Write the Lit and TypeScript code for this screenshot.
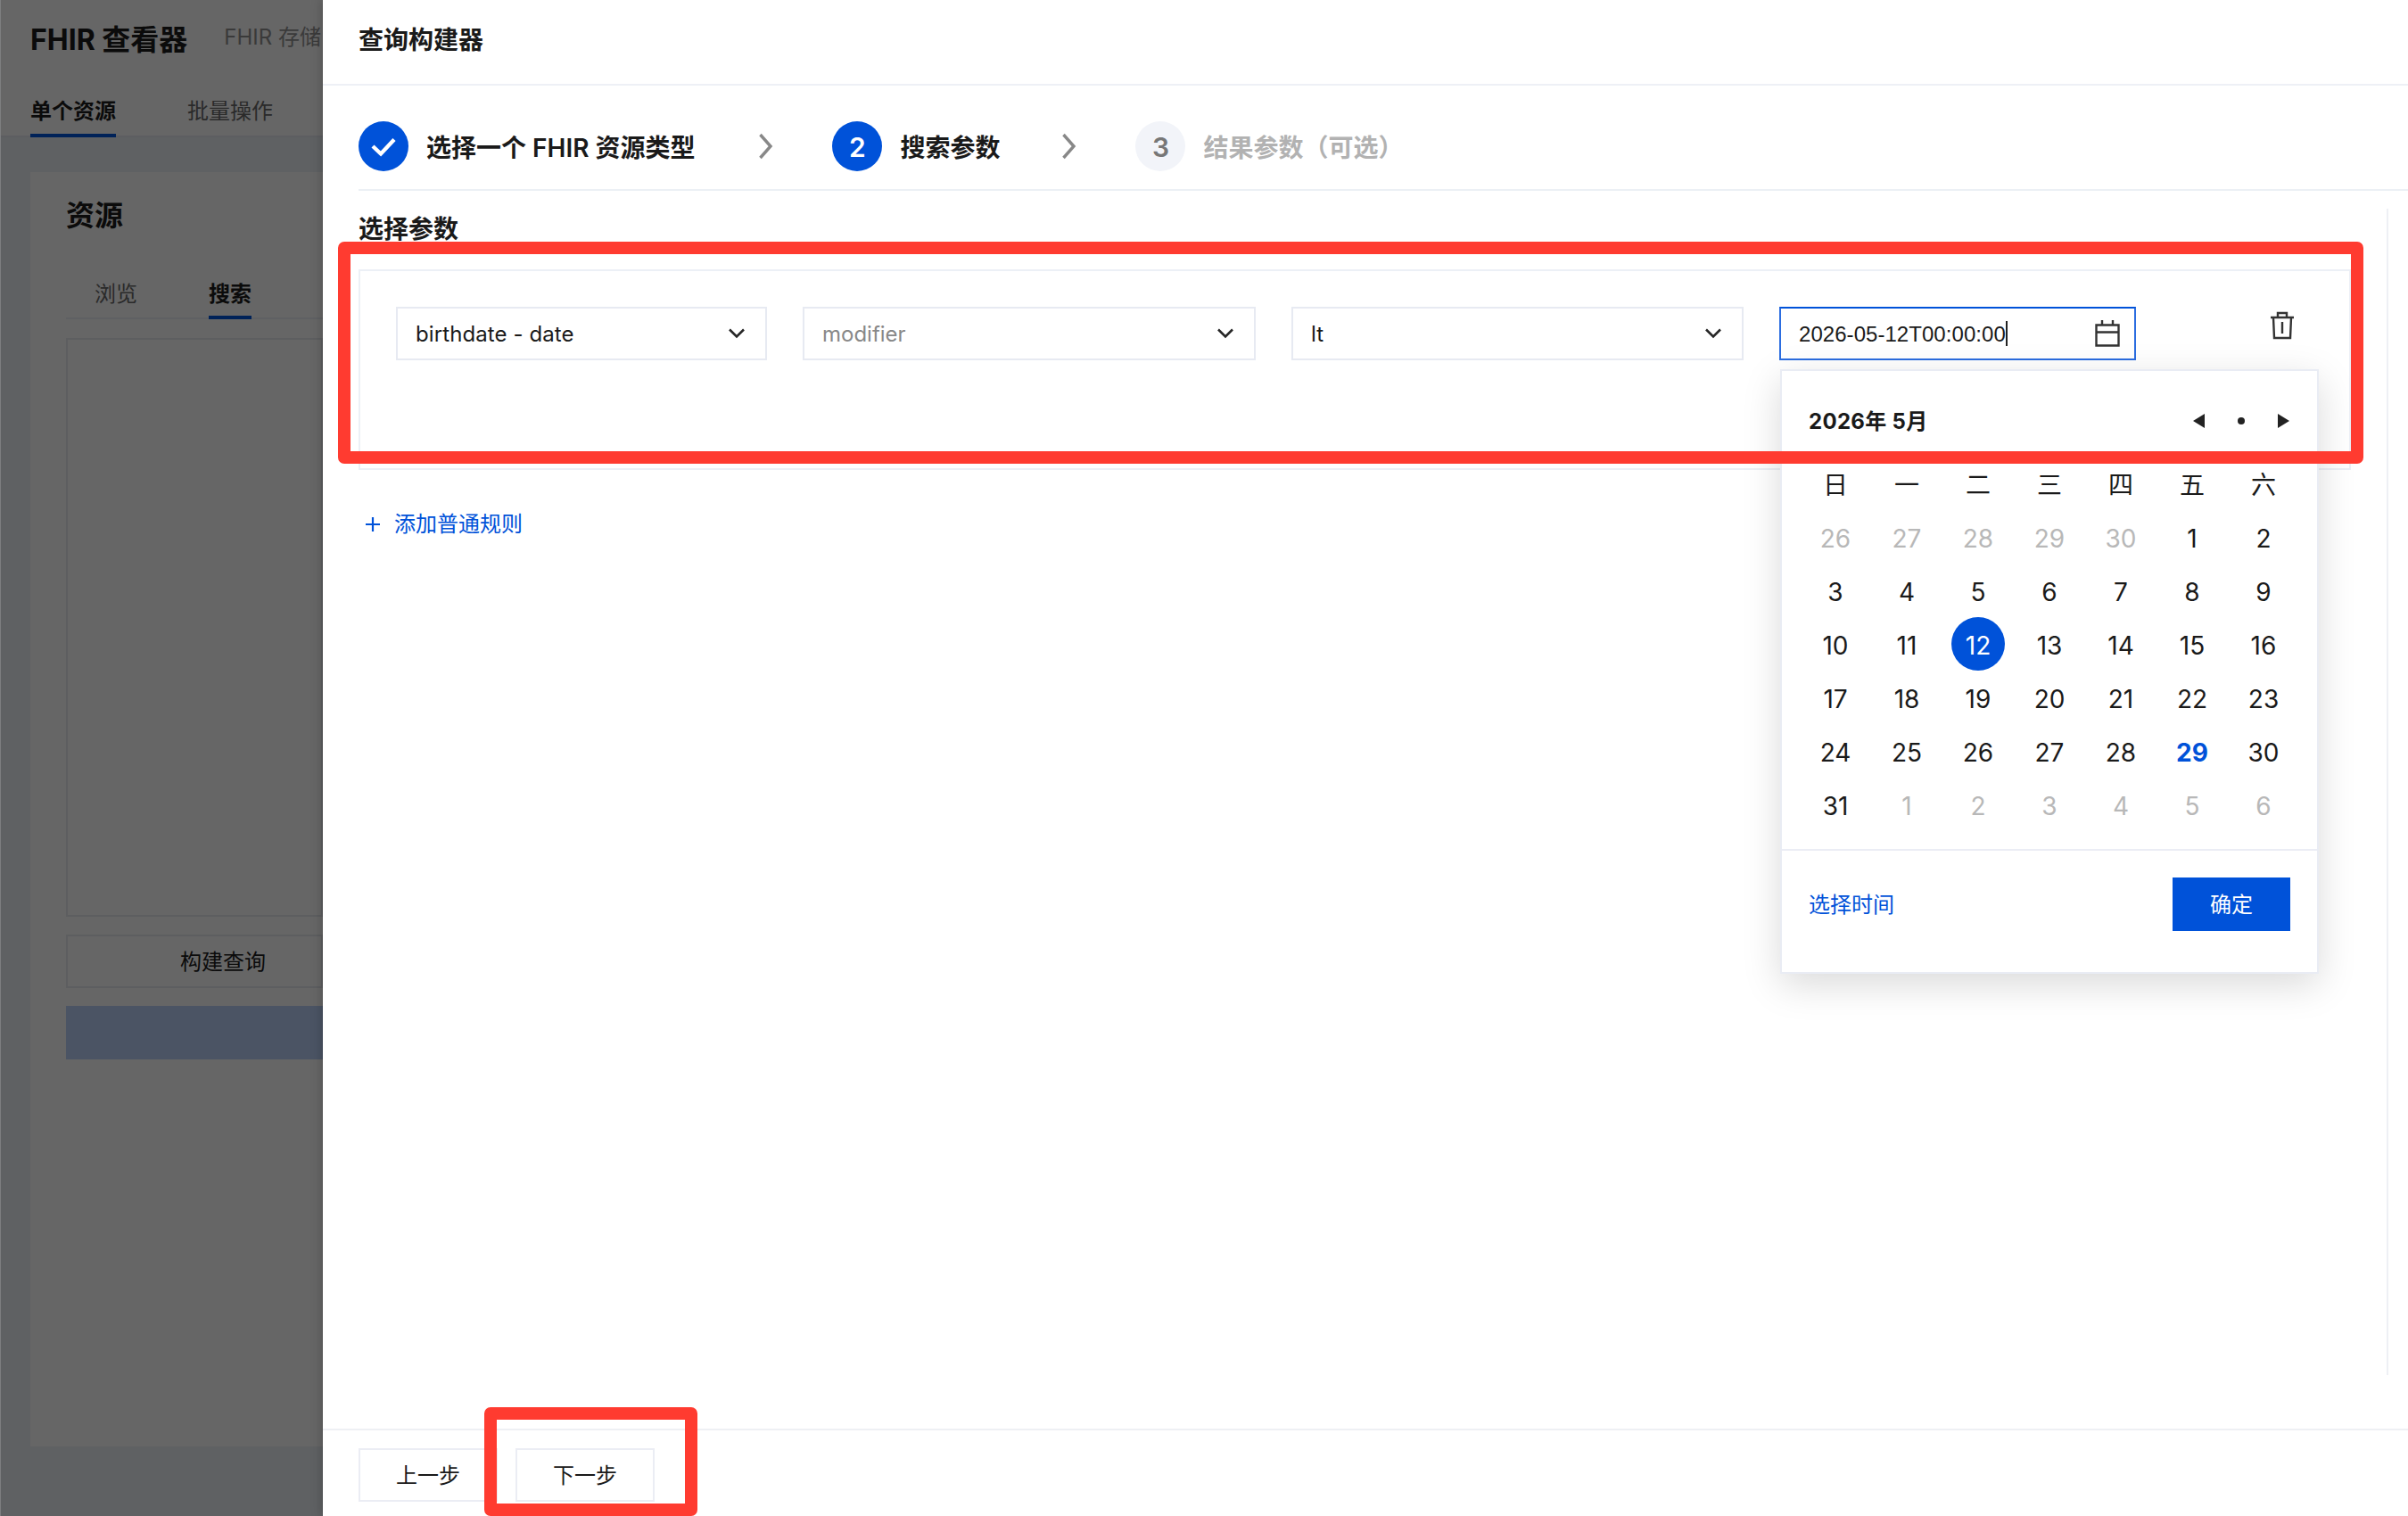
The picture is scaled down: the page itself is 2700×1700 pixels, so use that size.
import { LitElement, html, css, svg } from "lit";
import { customElement } from "lit/decorators.js";

const WEEKDAYS = ["日", "一", "二", "三", "四", "五", "六"];

interface Day { n: number; kind: "out" | "in" | "selected" | "today" }

const DAYS: Day[] = [
  ...[26, 27, 28, 29, 30].map((n): Day => ({ n, kind: "out" })),
  ...Array.from({ length: 31 }, (_, i): Day => ({
    n: i + 1,
    kind: i + 1 === 12 ? "selected" : i + 1 === 29 ? "today" : "in",
  })),
  ...[1, 2, 3, 4, 5, 6].map((n): Day => ({ n, kind: "out" })),
];

const down = svg`<svg class="down" width="20" height="14" viewBox="0 0 20 14"><path d="M2 2.5l8 8 8-8" fill="none" stroke="#262626" stroke-width="2.6"/></svg>`;
const next = svg`<svg class="next" width="18" height="30" viewBox="0 0 18 30"><path d="M2.5 2L14 15 2.5 28" fill="none" stroke="#888" stroke-width="3.4"/></svg>`;

@customElement("app-root")
export class AppRoot extends LitElement {
  static styles = css`
    :host {
      display: block; position: relative; width: 2700px; height: 1700px; overflow: hidden;
      font-family: Inter, "Noto Sans CJK SC", sans-serif; font-size: 24px; line-height: 36px;
      color: #1a1a1a; background: #fff;
    }
    * { box-sizing: border-box; }
    svg { display: block; flex: none; }
    .page { display: flex; height: 1700px; }

    .back { width: 362px; height: 1700px; overflow: hidden; background: #5f6163; color: #0b0b0b; border-left: 1px solid #7d7e80; white-space: nowrap; flex: none; }
    .top { height: 154px; background: #666; border-bottom: 2px solid #5d5e61; padding-left: 33px; }
    .brand { display: flex; height: 102px; align-items: flex-start; gap: 41px; }
    .brand b { font-size: 32px; line-height: 48px; padding-top: 21px; font-weight: 700; }
    .brand span { padding-top: 24px; color: #3a3a3a; }
    .tabs { display: flex; gap: 80px; height: 52px; color: #2a2a2a; }
    .tab { padding-top: 5px; height: 52px; }
    .on { font-weight: 700; color: #0b0b0b; border-bottom: 4px solid #002258; }
    .card { margin: 39px 0 0 33px; height: 1429px; background: #666; padding: 25px 0 0 40px; }
    .card h2 { margin: 0; font-size: 32px; line-height: 48px; font-weight: 600; }
    .subtabs { display: flex; gap: 80px; margin-top: 44px; height: 48px; padding-left: 32px; color: #2a2a2a; border-bottom: 2px solid #5f6063; }
    .subtabs .tab { padding-top: 2px; height: 48px; }
    .area { height: 649px; margin-top: 21px; border: 2px solid #5d5e60; }
    .build { margin-top: 20px; height: 60px; border: 2px solid #5d5e60; padding: 11px 0 0 126px; line-height: 36px; }
    .run { margin-top: 20px; height: 60px; background: #4b5464; }

    .drawer { flex: 1; display: flex; flex-direction: column; background: #fff; box-shadow: 0 0 12px rgba(0,0,0,.25); position: relative; }
    .title { height: 96px; border-bottom: 2px solid #eef0f6; padding: 24px 0 0 40px; font-size: 28px; line-height: 42px; font-weight: 600; }
    .steps { margin-left: 40px; height: 118px; padding-top: 40px; border-bottom: 2px solid #ecf0f5; display: flex; }
    .step { display: flex; align-items: center; height: 56px; gap: 20px; font-size: 28px; font-weight: 600; white-space: nowrap; }
    .dot { width: 56px; height: 56px; border-radius: 50%; background: #0052d9; color: #fff; display: grid; place-items: center; font-size: 30px; padding-top: 1px; }
    .step span { padding-top: 3px; }
    .wait { color: #b2b2b2; }
    .wait .dot { background: #f2f4f9; color: #777; }
    .next { margin: 13px 65px 0 71px; }
    .step + .next ~ .next { margin-left: 69px; }
    .body { flex: 1; margin: 20px 22px 60px 40px; border-right: 2px solid #eef0f5; }
    .body h3 { margin: 0; font-size: 28px; line-height: 42px; font-weight: 600; height: 68px; padding-top: 2px; }
    .rule { width: 2234px; height: 225px; border: 2px solid #ecf0f6; display: flex; padding: 40px; }
    .field { height: 60px; border: 2px solid #e7eaf2; display: flex; align-items: center; justify-content: space-between; padding: 0 22px 0 20px; margin-right: 40px; background: #fff; }
    .field span { padding-top: 2px; }
    .f1 { width: 416px; }
    .f1 span { letter-spacing: .1px; }
    .f2 { width: 508px; color: #888; }
    .f3 { width: 507px; }
    .f4 { width: 400px; border-color: #2b6de0; border-top-color: #0052d9; font-family: "Liberation Sans", sans-serif; padding-right: 16px; margin-right: 150px; }
    .f4 span { border-right: 2px solid #222; height: 28px; line-height: 27px; padding-top: 1px; letter-spacing: .05px; }
    .bin { margin-top: 5px; }
    .add { display: flex; align-items: center; gap: 16px; color: #0052d9; margin: 43px 0 0 8px; }
    .foot { height: 98px; border-top: 2px solid #eef0f4; display: flex; gap: 20px; padding: 20px 0 0 40px; }
    .btn { width: 156px; height: 60px; border: 2px solid #ebedf4; display: grid; place-items: center; padding-top: 2px; }

    .pop { position: absolute; left: 1996px; top: 414px; width: 604px; height: 678px; background: #fff; border: 2px solid #e9ecf4; box-shadow: 0 12px 40px rgba(0,0,0,.15); }
    .month { height: 98px; display: flex; justify-content: space-between; align-items: flex-start; padding: 39px 31px 0 30px; font-weight: 700; letter-spacing: .3px; }
    .nav { display: flex; align-items: center; gap: 37px; margin-top: 9px; }
    .grid { display: grid; grid-template-columns: repeat(7, 80px); grid-auto-rows: 60px; padding-left: 20px; height: 438px; font-size: 28px; }
    .cell { display: grid; place-items: center; }
    .d { width: 60px; height: 60px; text-align: center; line-height: 60px; }
    .out { color: #b8b8b8; }
    .selected { background: #0052d9; color: #fff; border-radius: 50%; line-height: 64px; margin-top: -4px; }
    .today { color: #0052d9; font-weight: 700; }
    .pfoot { border-top: 2px solid #ebedf5; display: flex; justify-content: space-between; padding: 30px 30px 0; color: #0052d9; line-height: 61px; }
    .ok { width: 132px; height: 60px; background: #0052d9; color: #fff; text-align: center; }

    .mark { position: absolute; border: 14px solid #ff3b30; border-radius: 7px; }
    .m1 { left: 379px; top: 271px; width: 2271px; height: 249px; }
    .m2 { left: 543px; top: 1578px; width: 239px; height: 122px; }
  `;

  render() {
    return html`
      <div class="page">
        <div class="back">
          <div class="top">
            <div class="brand"><b>FHIR 查看器</b><span>FHIR 存储</span></div>
            <div class="tabs"><div class="tab on">单个资源</div><div class="tab">批量操作</div></div>
          </div>
          <div class="card">
            <h2>资源</h2>
            <div class="subtabs"><div class="tab">浏览</div><div class="tab on">搜索</div></div>
            <div class="area"></div>
            <div class="build">构建查询</div>
            <div class="run"></div>
          </div>
        </div>
        <div class="drawer">
          <div class="title">查询构建器</div>
          <div class="steps">
            <div class="step">
              <div class="dot"><svg width="28" height="22" viewBox="0 0 28 22"><path d="M2 10l9 8.5L26 2.5" fill="none" stroke="#fff" stroke-width="4.4"/></svg></div>
              <span>选择一个 FHIR 资源类型</span>
            </div>
            ${next}
            <div class="step"><div class="dot">2</div><span>搜索参数</span></div>
            ${next}
            <div class="step wait"><div class="dot">3</div><span>结果参数（可选）</span></div>
          </div>
          <div class="body">
            <h3>选择参数</h3>
            <div class="rule">
              <div class="field f1"><span>birthdate - date</span>${down}</div>
              <div class="field f2"><span>modifier</span>${down}</div>
              <div class="field f3"><span>lt</span>${down}</div>
              <div class="field f4"><span>2026-05-12T00:00:00</span>
                <svg width="28" height="30" viewBox="0 0 28 30"><path d="M1.5 5.5h25v23h-25zM1.5 13.5h25M8 0v6M20 0v6" fill="none" stroke="#333" stroke-width="2.4"/></svg>
              </div>
              <svg class="bin" width="28" height="32" viewBox="0 0 28 32"><path d="M1 7h26M9 7V2h10v5M4 7l1 23h18l1-23M14 12v13" fill="none" stroke="#333" stroke-width="2.4"/></svg>
            </div>
            <div class="add"><svg width="16" height="16" viewBox="0 0 16 16"><path d="M8 0v16M0 8h16" stroke="#0052d9" stroke-width="2.2"/></svg>添加普通规则</div>
          </div>
          <div class="foot"><div class="btn">上一步</div><div class="btn">下一步</div></div>
        </div>
      </div>
      <div class="pop">
        <div class="month">2026年 5月
          <div class="nav">
            <svg width="13" height="16" viewBox="0 0 13 16"><path d="M13 0v16L0 8z" fill="#222"/></svg>
            <svg width="8" height="8" viewBox="0 0 8 8"><circle cx="4" cy="4" r="4" fill="#222"/></svg>
            <svg width="13" height="16" viewBox="0 0 13 16"><path d="M0 0v16l13-8z" fill="#222"/></svg>
          </div>
        </div>
        <div class="grid">
          ${WEEKDAYS.map((w) => html`<div class="cell">${w}</div>`)}
          ${DAYS.map((d) => html`<div class="cell"><div class="d ${d.kind}">${d.n}</div></div>`)}
        </div>
        <div class="pfoot"><span>选择时间</span><div class="ok">确定</div></div>
      </div>
      <div class="mark m1"></div>
      <div class="mark m2"></div>
    `;
  }
}
